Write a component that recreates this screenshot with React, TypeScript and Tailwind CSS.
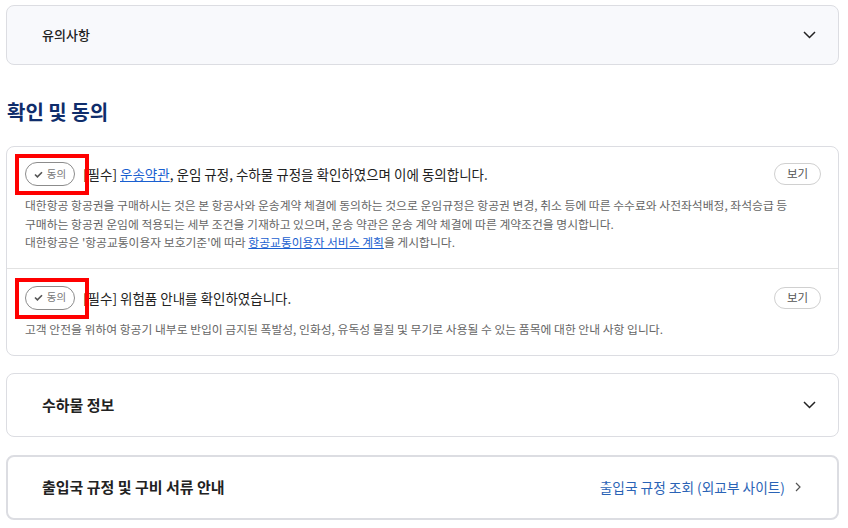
import React from 'react';

const font = { fontFamily: '"Noto Sans CJK KR", "Noto Sans", sans-serif' };

function ChevronDown() {
  return (
    <svg width="13" height="8" viewBox="0 0 13 8" fill="none">
      <path d="M1 1l5.5 5.5L12 1" stroke="#222" strokeWidth="1.5" />
    </svg>
  );
}

function AgreePill() {
  return (
    <div className="relative shrink-0">
      <div className="flex items-center justify-center gap-[4px] w-[50px] h-[24px] rounded-full border border-[#8c8c8c] bg-white">
        <svg width="9" height="7" viewBox="0 0 9 7" fill="none">
          <path d="M1 3.5l2.4 2.4L8 1.2" stroke="#555" strokeWidth="1.6" />
        </svg>
        <span className="text-[10.5px] leading-none text-[#777]">동의</span>
      </div>
      {/* annotation box */}
      <div className="absolute -left-[10px] -top-[8px] w-[74px] h-[41px] border-4 border-[#ff0000] pointer-events-none" />
    </div>
  );
}

function ViewButton() {
  return (
    <button className="shrink-0 w-[47px] h-[22px] rounded-full border border-[#d0d0d0] bg-white text-[11.5px] text-[#555] leading-none">
      보기
    </button>
  );
}

export default function App() {
  return (
    <div style={font} className="w-[848px] h-[528px] bg-white pl-[6px] pr-[9px] pt-[5px] text-[#222] overflow-hidden">
      {/* 유의사항 */}
      <div className="h-[60px] rounded-lg border border-[#dcdde2] bg-[#f8f9fc] flex items-center justify-between pl-[35px] pr-[22px]">
        <span className="text-[13px] font-medium">유의사항</span>
        <ChevronDown />
      </div>

      <h2 className="mt-[33px] text-[20px] font-bold leading-[28px] text-[#0f2d6b] pl-[1px]">확인 및 동의</h2>

      <div className="mt-[20px] rounded-lg border border-[#dcdde2] bg-white">
        {/* row 1 */}
        <div className="pt-[15px] pb-[16px] pl-[18px] pr-[17px] border-b border-[#e2e2e2]">
          <div className="flex items-center">
            <AgreePill />
            <div className="ml-[8px] flex-1 text-[13.5px] leading-[24px]">
              [필수] <span className="text-[#1a5fd0] underline">운송약관</span>, 운임 규정, 수하물 규정을 확인하였으며 이에 동의합니다.
            </div>
            <ViewButton />
          </div>
          <div className="mt-[10px] text-[11.8px] leading-[18.5px] text-[#666]">
            <p>대한항공 항공권을 구매하시는 것은 본 항공사와 운송계약 체결에 동의하는 것으로 운임규정은 항공권 변경, 취소 등에 따른 수수료와 사전좌석배정, 좌석승급 등</p>
            <p>구매하는 항공권 운임에 적용되는 세부 조건을 기재하고 있으며, 운송 약관은 운송 계약 체결에 따른 계약조건을 명시합니다.</p>
            <p>
              대한항공은 '항공교통이용자 보호기준'에 따라 <span className="text-[#1a5fd0] underline">항공교통이용자 서비스 계획</span>을 게시합니다.
            </p>
          </div>
        </div>
        {/* row 2 */}
        <div className="pt-[17px] pb-[17px] pl-[18px] pr-[17px]">
          <div className="flex items-center">
            <AgreePill />
            <div className="ml-[8px] flex-1 text-[13.5px] leading-[24px]">[필수] 위험품 안내를 확인하였습니다.</div>
            <ViewButton />
          </div>
          <div className="mt-[10px] text-[11.8px] leading-[18.5px] text-[#666]">
            <p>고객 안전을 위하여 항공기 내부로 반입이 금지된 폭발성, 인화성, 유독성 물질 및 무기로 사용될 수 있는 품목에 대한 안내 사항 입니다.</p>
          </div>
        </div>
      </div>

      {/* 수하물 정보 */}
      <div className="mt-[17px] h-[64px] rounded-lg border border-[#dcdde2] bg-white flex items-center justify-between pl-[35px] pr-[22px]">
        <span className="text-[15px] font-bold">수하물 정보</span>
        <ChevronDown />
      </div>

      {/* 출입국 규정 */}
      <div className="mt-[18px] h-[65px] rounded-lg border-2 border-[#dcdde2] bg-white flex items-center justify-between pl-[34px] pr-[36px]">
        <span className="text-[15px] font-bold">출입국 규정 및 구비 서류 안내</span>
        <a className="flex items-center gap-[10px] text-[13.7px] text-[#2a63b6]">
          출입국 규정 조회 (외교부 사이트)
          <svg width="6" height="10" viewBox="0 0 6 10" fill="none">
            <path d="M1 1l4 4-4 4" stroke="#555" strokeWidth="1.2" />
          </svg>
        </a>
      </div>
    </div>
  );
}
